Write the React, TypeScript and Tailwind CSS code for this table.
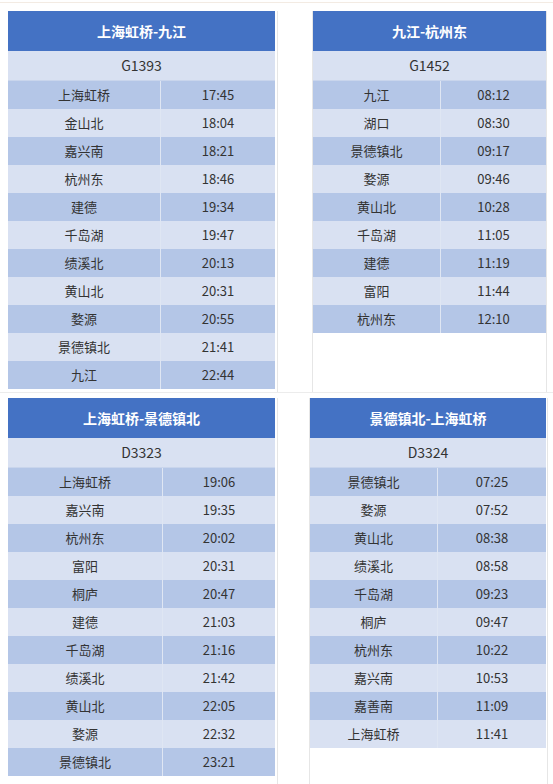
type Table = { title: string; train: string; stops: [string, string][] };

const tables: Table[] = [
  {
    title: "上海虹桥-九江",
    train: "G1393",
    stops: [
      ["上海虹桥", "17:45"],
      ["金山北", "18:04"],
      ["嘉兴南", "18:21"],
      ["杭州东", "18:46"],
      ["建德", "19:34"],
      ["千岛湖", "19:47"],
      ["绩溪北", "20:13"],
      ["黄山北", "20:31"],
      ["婺源", "20:55"],
      ["景德镇北", "21:41"],
      ["九江", "22:44"],
    ],
  },
  {
    title: "九江-杭州东",
    train: "G1452",
    stops: [
      ["九江", "08:12"],
      ["湖口", "08:30"],
      ["景德镇北", "09:17"],
      ["婺源", "09:46"],
      ["黄山北", "10:28"],
      ["千岛湖", "11:05"],
      ["建德", "11:19"],
      ["富阳", "11:44"],
      ["杭州东", "12:10"],
    ],
  },
  {
    title: "上海虹桥-景德镇北",
    train: "D3323",
    stops: [
      ["上海虹桥", "19:06"],
      ["嘉兴南", "19:35"],
      ["杭州东", "20:02"],
      ["富阳", "20:31"],
      ["桐庐", "20:47"],
      ["建德", "21:03"],
      ["千岛湖", "21:16"],
      ["绩溪北", "21:42"],
      ["黄山北", "22:05"],
      ["婺源", "22:32"],
      ["景德镇北", "23:21"],
    ],
  },
  {
    title: "景德镇北-上海虹桥",
    train: "D3324",
    stops: [
      ["景德镇北", "07:25"],
      ["婺源", "07:52"],
      ["黄山北", "08:38"],
      ["绩溪北", "08:58"],
      ["千岛湖", "09:23"],
      ["桐庐", "09:47"],
      ["杭州东", "10:22"],
      ["嘉兴南", "10:53"],
      ["嘉善南", "11:09"],
      ["上海虹桥", "11:41"],
    ],
  },
];

function Timetable({ t, firstCol }: { t: Table; firstCol: string }) {
  return (
    <div className="w-full">
      <div className="h-[40px] bg-[#4472c4] flex items-center justify-center text-white font-bold text-[14px]">
        {t.title}
      </div>
      <div className="h-[30px] bg-[#d9e1f2] flex items-center justify-center text-[#333] text-[14px] border-b border-[#c9d5ec]">
        {t.train}
      </div>
      {t.stops.map(([station, time], i) => (
        <div
          key={station + time}
          className={`h-[28px] flex text-[13px] text-[#333] ${i % 2 === 0 ? "bg-[#b4c6e7]" : "bg-[#d9e1f2]"}`}
        >
          <div className={`${firstCol} flex items-center justify-center border-r border-[#dfe6f3]`}>{station}</div>
          <div className="flex-1 flex items-center justify-center">{time}</div>
        </div>
      ))}
    </div>
  );
}

export default function App() {
  return (
    <div
      className="w-[553px] h-[784px] bg-white overflow-hidden"
      style={{ fontFamily: '"Noto Sans CJK SC", "Noto Sans", sans-serif' }}
    >
      <div className="h-[3px] border-b border-[#f3ebe3]" />
      <div className="flex h-[389px] pt-[8px]">
        <div className="w-[278px] pl-[8px] pr-[2px] border-r border-[#e6e6e6]">
          <Timetable t={tables[0]} firstCol="w-[153px]" />
        </div>
        <div className="w-[34px]" />
        <div className="w-[235px] pr-[1px] border-r border-l border-[#e6e6e6]">
          <div className="w-[233px]">
            <Timetable t={tables[1]} firstCol="w-[128px]" />
          </div>
        </div>
      </div>
      <div className="h-[6px] border-t border-[#ececec]" />
      <div className="flex h-[392px]">
        <div className="w-[278px] pl-[8px] pr-[2px] border-r border-[#e6e6e6]">
          <Timetable t={tables[2]} firstCol="w-[155px]" />
        </div>
        <div className="w-[31px]" />
        <div className="w-[239px] border-r border-l border-[#e6e6e6]">
          <div className="w-[236px]">
            <Timetable t={tables[3]} firstCol="w-[128px]" />
          </div>
        </div>
      </div>
    </div>
  );
}
